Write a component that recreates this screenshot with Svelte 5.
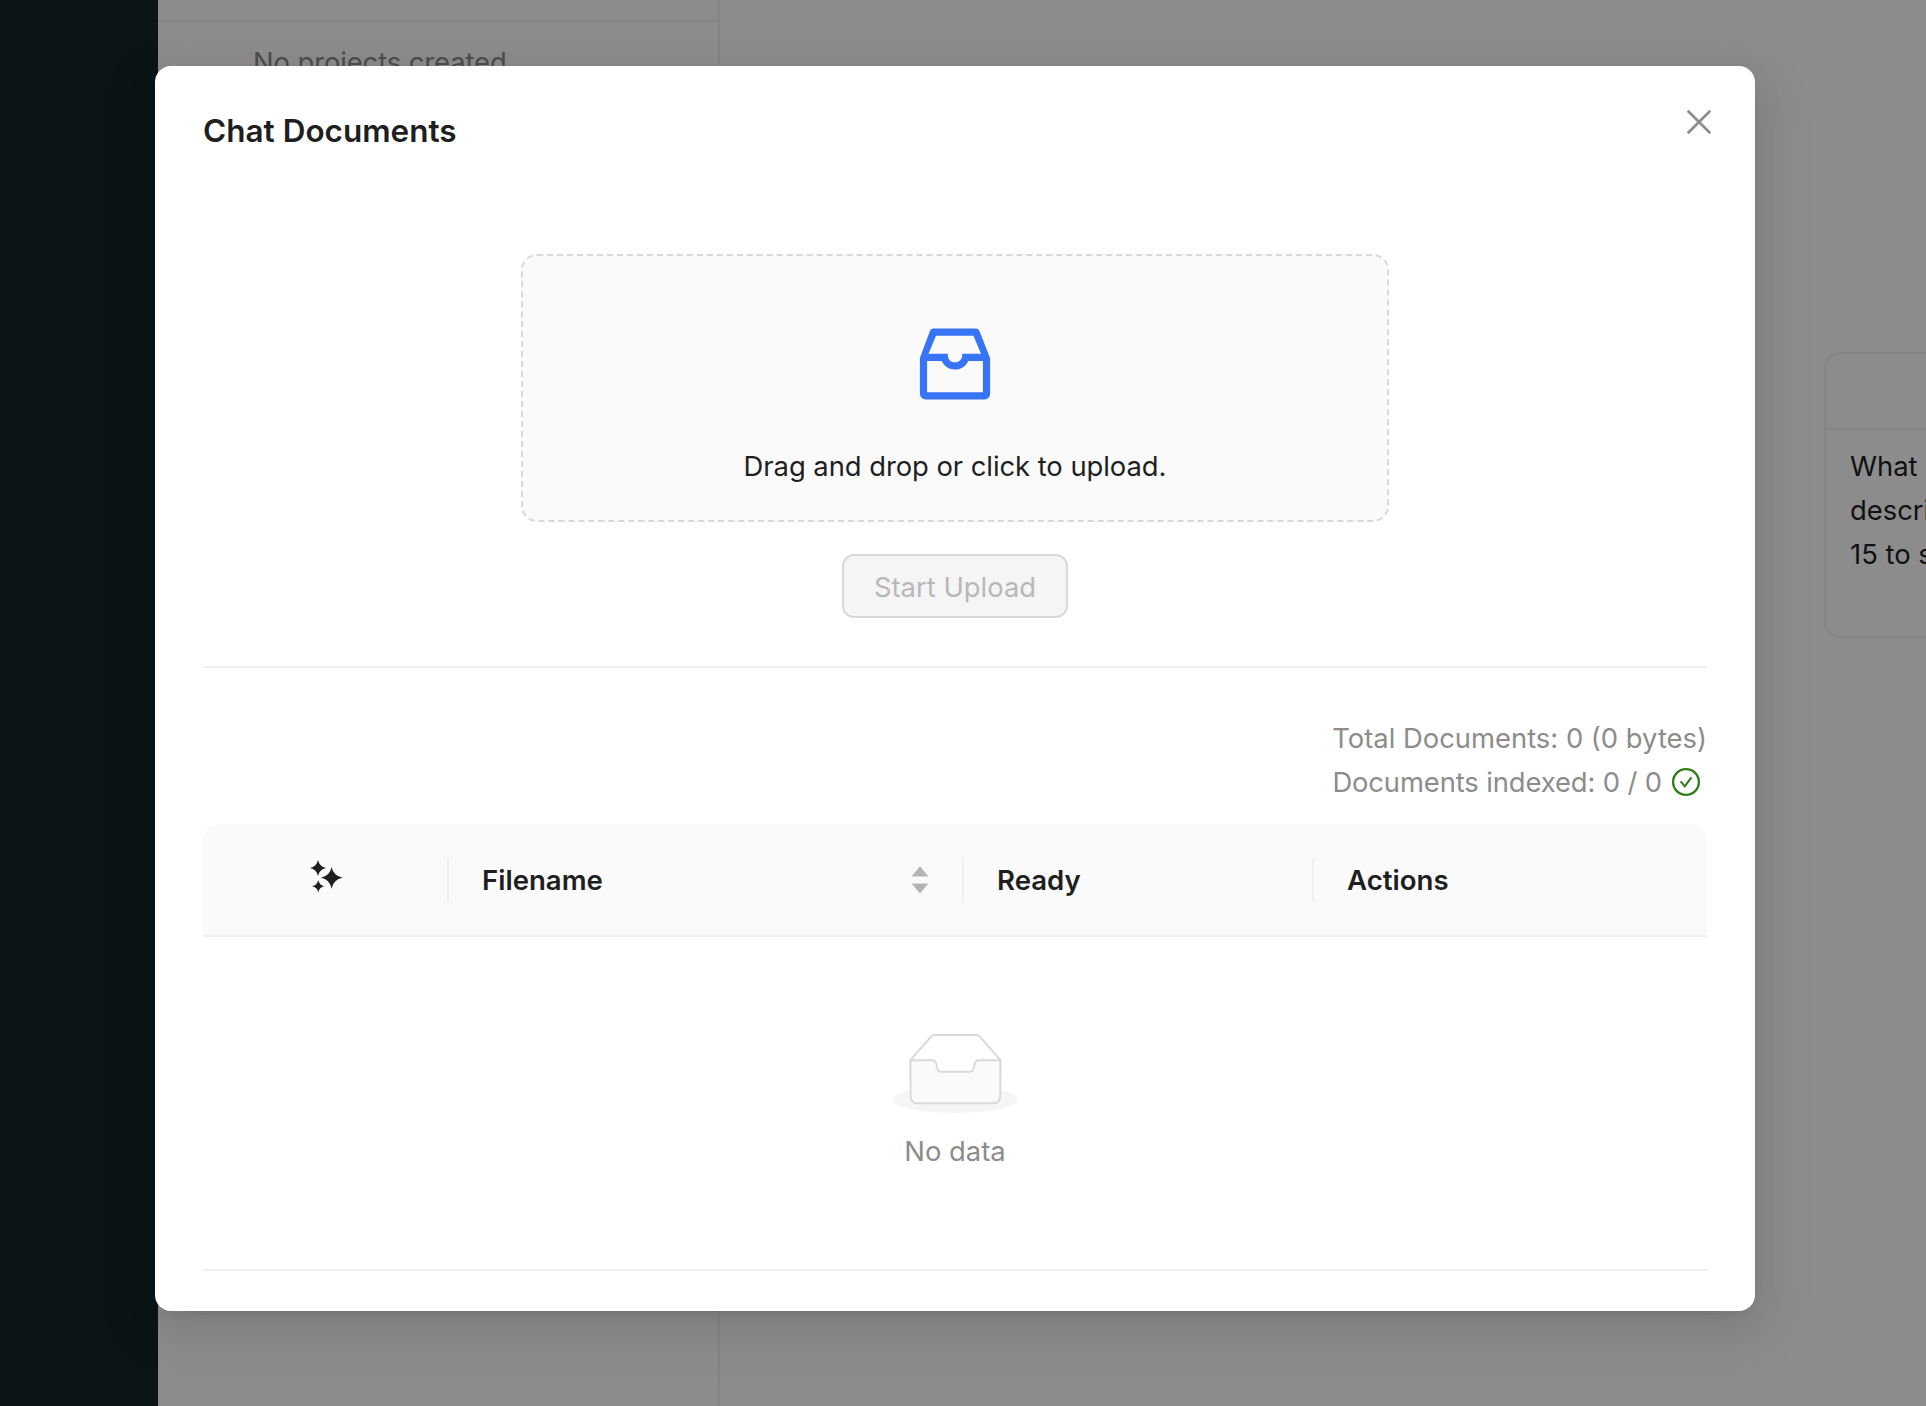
<script>
  const columns = ['Filename', 'Ready', 'Actions'];
</script>

<div class="app">
  <aside class="sidebar"></aside>
  <section class="projects">
    <div class="projects-top"></div>
    <p class="no-projects">No projects created</p>
  </section>
  <main class="main">
    <article class="card">
      <header class="card-head"></header>
      <div class="card-body">
        <div>What is</div>
        <div>describe</div>
        <div>15 to say</div>
      </div>
    </article>
  </main>
</div>

<div class="mask">
  <div class="modal" role="dialog" aria-label="Chat Documents">
    <header class="modal-head">
      <h1>Chat Documents</h1>
      <button class="close" aria-label="Close">
        <svg viewBox="0 0 32 32" width="32" height="32"><path d="M4.7 4.7 27.3 27.3M27.3 4.7 4.7 27.3" fill="none" stroke="currentColor" stroke-width="2.7" /></svg>
      </button>
    </header>

    <div class="upload">
      <div class="dropzone">
        <svg class="inbox" viewBox="0 0 1024 1024" width="96" height="96"><path fill="currentColor" d="M885.2 446.3l-.2-.8-112.2-285.1c-5-16.1-19.9-27.2-36.8-27.2H281.2c-17 0-32.1 11.3-36.9 27.6L139.4 443l-.3.7-.2.8c-1.3 4.9-1.7 9.9-1 14.8-.1 1.6-.2 3.2-.2 4.8V830a60.9 60.9 0 0060.8 60.8h627.2c33.5 0 60.8-27.3 60.9-60.8V464.1c0-1.3 0-2.6-.1-3.7.4-4.9 0-9.6-1.3-14.1zm-295.8-43l-.3 15.7c-.8 44.9-31.8 75.1-77.1 75.1-22.1 0-41.1-7.1-54.8-20.6S436 441.2 435.6 419l-.3-15.7H229.5L309 210h399.2l81.7 193.3H589.4zm-375 76.8h157.3c24.3 57.1 76 90.8 140.4 90.8 33.7 0 65-9.4 90.3-27.2 22.2-15.6 39.5-37.4 50.7-63.6h156.5V814H214.4V480.1z" /></svg>
        <span>Drag and drop or click to upload.</span>
      </div>
      <button class="start" disabled>Start Upload</button>
    </div>

    <div class="stats">
      <div>Total Documents: 0 (0 bytes)</div>
      <div class="indexed">
        <span class="indexed-text">Documents indexed: 0 / 0</span>
        <svg class="check" viewBox="0 0 32 32" width="32" height="32" fill="none" stroke="currentColor"><circle cx="16" cy="16" r="12.9" stroke-width="2.3" /><path d="M10.6 15.3 14.8 20.4 21.4 11.4" stroke-width="2.1" /></svg>
      </div>
    </div>

    <div class="table">
      <div class="thead">
        <div class="th icon-col">
          <svg class="sparkles" viewBox="0 0 50 50" width="50" height="50" fill="currentColor">
            <path d="M18 10Q19.4 16.6 26 18Q19.4 19.4 18 26Q16.6 19.4 10 18Q16.6 16.6 18 10Z" />
            <path d="M31.6 17Q33.4 25.9 42.6 27.8Q33.4 29.6 31.6 38.4Q29.8 29.6 21 27.8Q29.8 25.9 31.6 17Z" />
            <path d="M18.3 30Q19.3 35.3 24.3 36.3Q19.3 37.3 18.3 42.4Q17.3 37.3 12 36.3Q17.3 35.3 18.3 30Z" />
          </svg>
        </div>
        {#each columns as name}
          <div class="th">
            <span>{name}</span>
            {#if name === 'Filename'}
              <svg class="sorter" viewBox="0 0 18 28" width="18" height="28"><path fill="currentColor" d="M9 .2 17.4 10.4H.6ZM.6 17.4H17.4L9 27.6Z" /></svg>
            {/if}
          </div>
        {/each}
      </div>
      <div class="empty">
        <svg class="empty-img" viewBox="0 0 64 41" width="124.9" height="80"><g transform="translate(0 1)" fill="none" fill-rule="evenodd"><ellipse fill="#f5f5f5" cx="32" cy="33" rx="32" ry="7" /><g fill-rule="nonzero" stroke="#d9d9d9"><path d="M55 12.76L44.854 1.258C44.367.474 43.656 0 42.907 0H21.093c-.749 0-1.46.474-1.947 1.257L9 12.761V22h46v-9.24z" /><path d="M41.613 15.931c0-1.605.994-2.93 2.227-2.931H55v18.137C55 33.26 53.68 35 52.05 35h-40.1C10.32 35 9 33.259 9 31.137V13h11.16c1.233 0 2.227 1.323 2.227 2.928v.022c0 1.605 1.005 2.901 2.237 2.901h14.752c1.232 0 2.237-1.308 2.237-2.913v-.007z" fill="#fafafa" /></g></g></svg>
        <span>No data</span>
      </div>
    </div>
  </div>
</div>

<style>
  :global(body) {
    overflow: hidden;
    font-family: Inter, 'Liberation Sans', sans-serif;
    font-size: 27.4px;
    line-height: 44px;
    color: #1f1f1f;
  }
  :global(*) {
    box-sizing: border-box;
  }
  .app {
    display: flex;
    width: 1926px;
    height: 1406px;
    overflow: hidden;
    background: #fff;
  }
  .sidebar {
    flex: none;
    width: 158px;
    background: #142629;
  }
  .projects {
    flex: none;
    width: 562px;
    border-right: 2px solid #f0f0f0;
  }
  .projects-top {
    height: 22px;
    border-bottom: 2px solid #f0f0f0;
  }
  .no-projects {
    margin: 18px 0 0 95px;
    white-space: nowrap;
    letter-spacing: -0.1px;
    color: #8c8c8c;
  }
  .main {
    flex: 1;
    min-width: 0;
    padding: 352px 0 0 1104px;
  }
  .card {
    width: 420px;
    height: 286px;
    border: 2px solid #f0f0f0;
    border-radius: 16px;
  }
  .card-head {
    height: 76px;
    border-bottom: 2px solid #f0f0f0;
  }
  .card-body {
    padding: 14px 24px;
    white-space: nowrap;
  }
  .mask {
    position: absolute;
    inset: 0;
    display: flex;
    padding: 66px 0 0 155px;
    overflow: hidden;
    background: rgba(0, 0, 0, 0.45);
  }
  .modal {
    width: 1600px;
    height: 1245px;
    padding: 40px 48px;
    border-radius: 16px;
    background: #fff;
    box-shadow:
      0 12px 32px 0 rgba(0, 0, 0, 0.08),
      0 6px 12px -8px rgba(0, 0, 0, 0.12),
      0 18px 56px 16px rgba(0, 0, 0, 0.05);
  }
  .modal-head {
    display: flex;
    justify-content: space-between;
    height: 148px;
  }
  h1 {
    margin: 0;
    font-size: 31.5px;
    font-weight: 600;
    line-height: 50px;
  }
  button {
    font: inherit;
  }
  .close {
    width: 32px;
    height: 32px;
    margin-right: -8px;
    padding: 0;
    border: 0;
    background: none;
    color: #8c8c8c;
  }
  svg {
    display: block;
    flex: none;
  }
  .upload {
    display: flex;
    flex-direction: column;
    align-items: center;
    height: 414px;
    border-bottom: 2px solid #f0f0f0;
  }
  .dropzone {
    display: flex;
    flex-direction: column;
    align-items: center;
    width: 868px;
    height: 268px;
    padding-top: 60px;
    border: 2px dashed #d9d9d9;
    border-radius: 16px;
    background: #fafafa;
    letter-spacing: -0.05px;
  }
  .inbox {
    margin-bottom: 32px;
    color: #3875f6;
  }
  .start {
    width: 226px;
    height: 64px;
    margin-top: 32px;
    padding: 2px 0 0;
    border: 2px solid #d9d9d9;
    border-radius: 12px;
    background: #f5f5f5;
    color: #b8b8b8;
  }
  .stats {
    display: flex;
    flex-direction: column;
    align-items: flex-end;
    padding: 48px 0 20px;
    color: #8c8c8c;
  }
  .indexed {
    display: flex;
    align-items: center;
    padding-right: 5px;
    gap: 8px;
  }
  .indexed-text {
    letter-spacing: -0.12px;
  }
  .check {
    color: #2f7d17;
  }
  .thead {
    display: grid;
    grid-template-columns: 246px 515px 350px 393px;
    height: 113px;
    border-bottom: 2px solid #f0f0f0;
    border-radius: 16px 16px 0 0;
    background: #fafafa;
    font-size: 27.6px;
    font-weight: 600;
  }
  .th {
    display: flex;
    align-items: center;
    justify-content: space-between;
    height: 44px;
    margin-top: 34px;
    padding: 0 33px;
    border-right: 2px solid #f0f0f0;
  }
  .th:last-child {
    border-right: 0;
  }
  .icon-col {
    padding: 0 0 0 97px;
    justify-content: flex-start;
  }
  .sparkles {
    margin-top: -10px;
  }
  .sorter {
    color: #b5b5b5;
  }
  .empty {
    display: flex;
    flex-direction: column;
    align-items: center;
    height: 334px;
    padding-top: 96px;
    border-bottom: 2px solid #f0f0f0;
    gap: 16px;
    color: #8c8c8c;
  }
</style>
